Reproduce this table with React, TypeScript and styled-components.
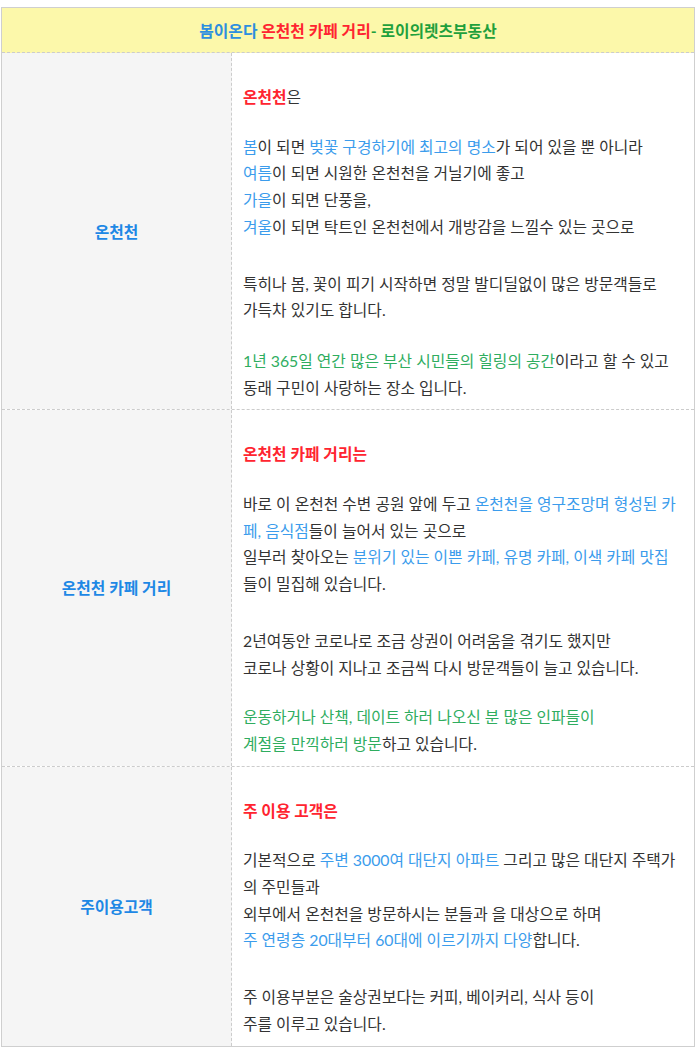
import React from 'react';
import styled, { createGlobalStyle } from 'styled-components';

const Global = createGlobalStyle`
  *, *::before, *::after { box-sizing: border-box; }
  body {
    margin: 0;
    background: #ffffff;
    font-family: Lato, "Noto Sans CJK KR", sans-serif;
    color: #333333;
  }
`;

const Table = styled.div`
  margin: 7px 0 0 1px;
  width: 694px;
  border: 1px solid #cfcfcf;
`;

const Header = styled.div`
  height: 45px;
  background: #fcf8aa;
  border-bottom: 1px dashed #cccccc;
  display: flex;
  align-items: center;
  justify-content: center;
  font-size: 15.8px;
  font-weight: 700;
`;

const Row = styled.div`
  display: grid;
  grid-template-columns: 230px 1fr;
  border-bottom: 1px dashed #cccccc;
  &:last-child {
    border-bottom: none;
  }
`;

const Label = styled.div`
  background: #f5f5f5;
  border-right: 1px dashed #cccccc;
  display: flex;
  align-items: center;
  justify-content: center;
  color: #1e88e5;
  font-size: 15.8px;
  font-weight: 700;
`;

const Content = styled.div`
  padding: 31px 14px 8px 11px;
  font-size: 15.8px;
  line-height: 26.7px;
  color: #333333;
`;

const Title = styled.div`
  margin: 0;
`;

const Para = styled.p<{ $gap: number }>`
  margin: ${(p) => p.$gap}px 0 0;
`;

const Red = styled.span`
  color: #ff2430;
  font-weight: 700;
`;

const Blue = styled.span<{ $bold?: boolean }>`
  color: ${(p) => (p.$bold ? '#2d8fdf' : '#3b9cec')};
  font-weight: ${(p) => (p.$bold ? 700 : 400)};
`;

const Green = styled.span<{ $bold?: boolean }>`
  color: ${(p) => (p.$bold ? '#1fa03c' : '#2fad5f')};
  font-weight: ${(p) => (p.$bold ? 700 : 400)};
`;

const TITLE_GAP = 23;
const PARA_GAP = 30;
const GREEN_GAP = 24;

export default function App() {
  return (
    <>
      <Global />
      <Table>
        <Header>
          <Blue $bold>봄이온다</Blue>
          <Red>&nbsp;온천천 카페 거리</Red>
          <Green $bold>- 로이의렛츠부동산</Green>
        </Header>

        <Row>
          <Label>온천천</Label>
          <Content>
            <Title>
              <Red>온천천</Red>은
            </Title>
            <Para $gap={TITLE_GAP}>
              <Blue>봄</Blue>이 되면 <Blue>벚꽃 구경하기에 최고의 명소</Blue>가 되어 있을 뿐 아니라
              <br />
              <Blue>여름</Blue>이 되면 시원한 온천천을 거닐기에 좋고
              <br />
              <Blue>가을</Blue>이 되면 단풍을,
              <br />
              <Blue>겨울</Blue>이 되면 탁트인 온천천에서 개방감을 느낄수 있는 곳으로
            </Para>
            <Para $gap={PARA_GAP}>
              특히나 봄, 꽃이 피기 시작하면 정말 발디딜없이 많은 방문객들로
              <br />
              가득차 있기도 합니다.
            </Para>
            <Para $gap={GREEN_GAP}>
              <Green>1년 365일 연간 많은 부산 시민들의 힐링의 공간</Green>이라고 할 수 있고
              <br />
              동래 구민이 사랑하는 장소 입니다.
            </Para>
          </Content>
        </Row>

        <Row>
          <Label>온천천 카페 거리</Label>
          <Content>
            <Title>
              <Red>온천천 카페 거리는</Red>
            </Title>
            <Para $gap={TITLE_GAP}>
              바로 이 온천천 수변 공원 앞에 두고 <Blue>온천천을 영구조망며 형성된 카페, 음식점</Blue>들이 늘어서 있는 곳으로
              <br />
              일부러 찾아오는 <Blue>분위기 있는 이쁜 카페, 유명 카페, 이색 카페 맛집</Blue>들이 밀집해 있습니다.
            </Para>
            <Para $gap={PARA_GAP}>
              2년여동안 코로나로 조금 상권이 어려움을 겪기도 했지만
              <br />
              코로나 상황이 지나고 조금씩 다시 방문객들이 늘고 있습니다.
            </Para>
            <Para $gap={TITLE_GAP}>
              <Green>운동하거나 산책, 데이트 하러 나오신 분 많은 인파들이</Green>
              <br />
              <Green>계절을 만끽하러 방문</Green>하고 있습니다.
            </Para>
          </Content>
        </Row>

        <Row>
          <Label>주이용고객</Label>
          <Content>
            <Title>
              <Red>주 이용 고객은</Red>
            </Title>
            <Para $gap={TITLE_GAP}>
              기본적으로 <Blue>주변 3000여 대단지 아파트</Blue> 그리고 많은 대단지 주택가의 주민들과
              <br />
              외부에서 온천천을 방문하시는 분들과 을 대상으로 하며
              <br />
              <Blue>주 연령층 20대부터 60대에 이르기까지 다양</Blue>합니다.
            </Para>
            <Para $gap={PARA_GAP}>
              주 이용부분은 술상권보다는 커피, 베이커리, 식사 등이
              <br />
              주를 이루고 있습니다.
            </Para>
          </Content>
        </Row>
      </Table>
    </>
  );
}
